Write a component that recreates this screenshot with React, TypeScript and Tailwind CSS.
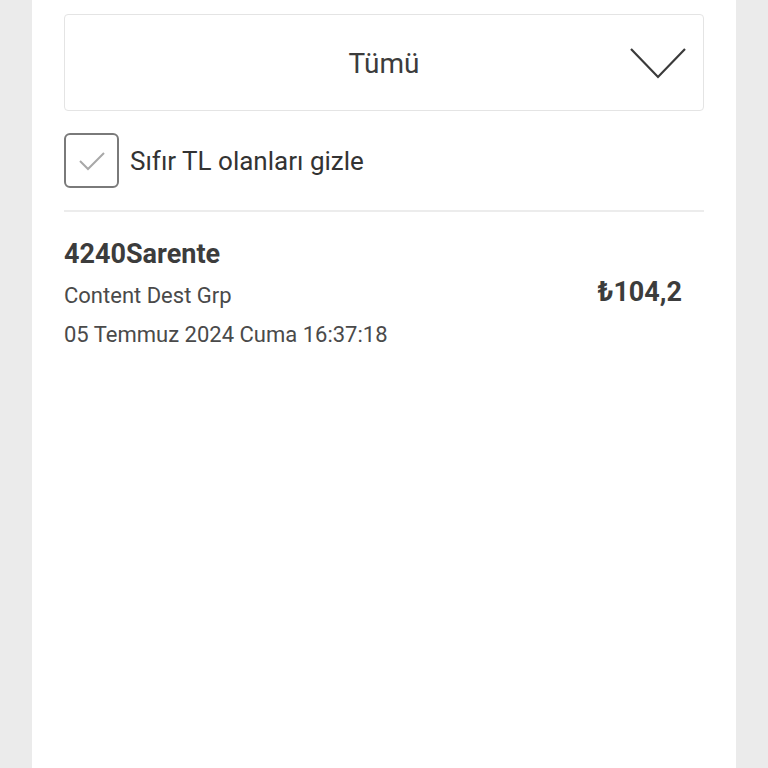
export default function App() {
  return (
    <div className="flex min-h-[768px] w-full justify-center bg-[#ebebeb] font-['Roboto',sans-serif]">
      <div className="flex w-[704px] flex-col bg-white px-8 pt-[14px]">
        <button className="relative flex h-[97px] w-full items-center justify-center rounded-[4px] border border-[#e4e4e4] bg-white">
          <span className="pt-[2px] text-[28px] text-[#3c3c3c]">Tümü</span>
          <svg
            className="absolute right-[16px] top-[32px]"
            width="58"
            height="33"
            viewBox="0 0 58 33"
            fill="none"
          >
            <path d="M2 2L29 30L56 2" stroke="#3a3a3a" strokeWidth="2.2" />
          </svg>
        </button>

        <label className="mt-[22px] flex items-center gap-[11px]">
          <span className="flex h-[55px] w-[55px] items-center justify-center rounded-[6px] border-2 border-[#7a7a7a]">
            <svg width="30" height="24" viewBox="0 0 30 24" fill="none">
              <path d="M3 12L11 20L27 4" stroke="#a8a8a8" strokeWidth="2" />
            </svg>
          </span>
          <span className="pt-[2px] text-[26px] text-[#333]">Sıfır TL olanları gizle</span>
        </label>

        <div className="mt-[22px] h-[2px] w-full bg-[#ececec]" />

        <div className="mt-[26px] flex items-center justify-between">
          <div className="flex flex-col">
            <span className="text-[27px] font-bold leading-[32px] text-[#3c3c3c]">4240Sarente</span>
            <span className="mt-[11px] text-[22px] leading-[30px] text-[#4a4a4a]">Content Dest Grp</span>
            <span className="mt-[9px] text-[22px] leading-[30px] text-[#4a4a4a]">05 Temmuz 2024 Cuma 16:37:18</span>
          </div>
          <span className="mr-[22px] mb-[4px] text-[27px] font-bold text-[#3c3c3c]">₺104,2</span>
        </div>
      </div>
    </div>
  );
}
